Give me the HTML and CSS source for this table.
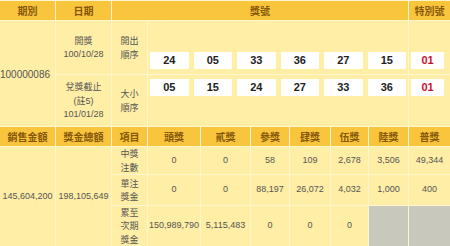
FILE: index.html
```html
<!DOCTYPE html>
<html>
<head>
<meta charset="utf-8">
<link rel="stylesheet" href="styles.css">
</head>
<body>
<div class="board">
  <div class="top">
    <div class="hd">期別</div>
    <div class="hd">日期</div>
    <div class="hd span3">獎號</div>
    <div class="hd">特別號</div>

    <div class="cell period">100000086</div>
    <div class="cell"><span><span class="zh">開獎</span><br>100/10/28</span></div>
    <div class="cell zh">開出<br>順序</div>
    <div class="cell nums bottom">
      <span class="ball">24</span><span class="ball">05</span><span class="ball">33</span><span class="ball">36</span><span class="ball">27</span><span class="ball">15</span>
    </div>
    <div class="cell special bottom"><span class="ball red">01</span></div>

    <div class="cell"><span><span class="zh">兌獎截止</span><br>(<span class="zh">註</span>5)<br>101/01/28</span></div>
    <div class="cell zh">大小<br>順序</div>
    <div class="cell nums top-al">
      <span class="ball">05</span><span class="ball">15</span><span class="ball">24</span><span class="ball">27</span><span class="ball">33</span><span class="ball">36</span>
    </div>
    <div class="cell special top-al"><span class="ball red">01</span></div>
  </div>

  <div class="prize">
    <div class="hd">銷售金額</div>
    <div class="hd">獎金總額</div>
    <div class="hd">項目</div>
    <div class="hd">頭獎</div>
    <div class="hd">貳獎</div>
    <div class="hd">參獎</div>
    <div class="hd">肆獎</div>
    <div class="hd">伍獎</div>
    <div class="hd">陸獎</div>
    <div class="hd">普獎</div>

    <div class="cell money">145,604,200</div>
    <div class="cell money">198,105,649</div>
    <div class="cell zh">中獎<br>注數</div>
    <div class="cell">0</div>
    <div class="cell">0</div>
    <div class="cell">58</div>
    <div class="cell">109</div>
    <div class="cell">2,678</div>
    <div class="cell">3,506</div>
    <div class="cell">49,344</div>

    <div class="cell zh">單注<br>獎金</div>
    <div class="cell">0</div>
    <div class="cell">0</div>
    <div class="cell">88,197</div>
    <div class="cell">26,072</div>
    <div class="cell">4,032</div>
    <div class="cell">1,000</div>
    <div class="cell">400</div>

    <div class="cell zh">累至<br>次期<br>獎金</div>
    <div class="cell">150,989,790</div>
    <div class="cell">5,115,483</div>
    <div class="cell">0</div>
    <div class="cell">0</div>
    <div class="cell">0</div>
    <div class="cell grey"></div>
    <div class="cell grey"></div>
  </div>
</div>
</body>
</html>
```

FILE: styles.css
```css
html, body {
  margin: 0;
  padding: 0;
  background: #fff6cf;
}
body {
  width: 450px;
  height: 246px;
  overflow: hidden;
  font-family: "Liberation Sans", "Noto Sans CJK TC", sans-serif;
  font-size: 9px;
  color: #555;
}
.board {
  display: flex;
  flex-direction: column;
  gap: 1px;
  padding-top: 1px;
  background: #fff6cf;
}
.top {
  display: grid;
  grid-template-columns: 55px 55px 35px 260px 41px;
  grid-template-rows: 19px 53px 51px;
  gap: 1px;
}
.prize {
  display: grid;
  grid-template-columns: 55px 55px 35px 52px 49px 38px 40px 37px 39px 41px;
  grid-template-rows: 19px 27px 30px 40px;
  gap: 1px;
}
.hd {
  background: #f8c53d;
  color: #85570a;
  font-weight: bold;
  font-size: 10px;
  display: flex;
  align-items: center;
  justify-content: center;
  font-family: "Noto Sans CJK TC", sans-serif;
}
.span3 {
  grid-column: span 2;
}
.cell {
  background: #ffeea6;
  display: flex;
  align-items: center;
  justify-content: center;
  text-align: center;
  line-height: 13.1px;
}
.zh {
  font-family: "Noto Sans CJK TC", sans-serif;
  font-size: 9px;
  line-height: 13.1px;
}
.period {
  grid-row: span 2;
  justify-content: flex-start;
  font-size: 10px;
  padding-top: 2px;
}
.money {
  grid-row: span 3;
}
.nums {
  gap: 5px;
  padding: 0 2px;
}
.nums .ball {
  flex: 1;
}
.bottom {
  align-items: flex-end;
  padding-bottom: 5px;
}
.top-al {
  align-items: flex-start;
  padding-top: 4px;
}
.special {
  justify-content: flex-start;
  padding-left: 2px;
}
.special .ball {
  width: 33px;
}
.ball {
  background: #fff;
  height: 17px;
  display: flex;
  align-items: center;
  justify-content: center;
  font-weight: bold;
  font-size: 11px;
  color: #222;
}
.red {
  color: #c8102e;
}
.grey {
  background: #c8c9bc;
}
```
